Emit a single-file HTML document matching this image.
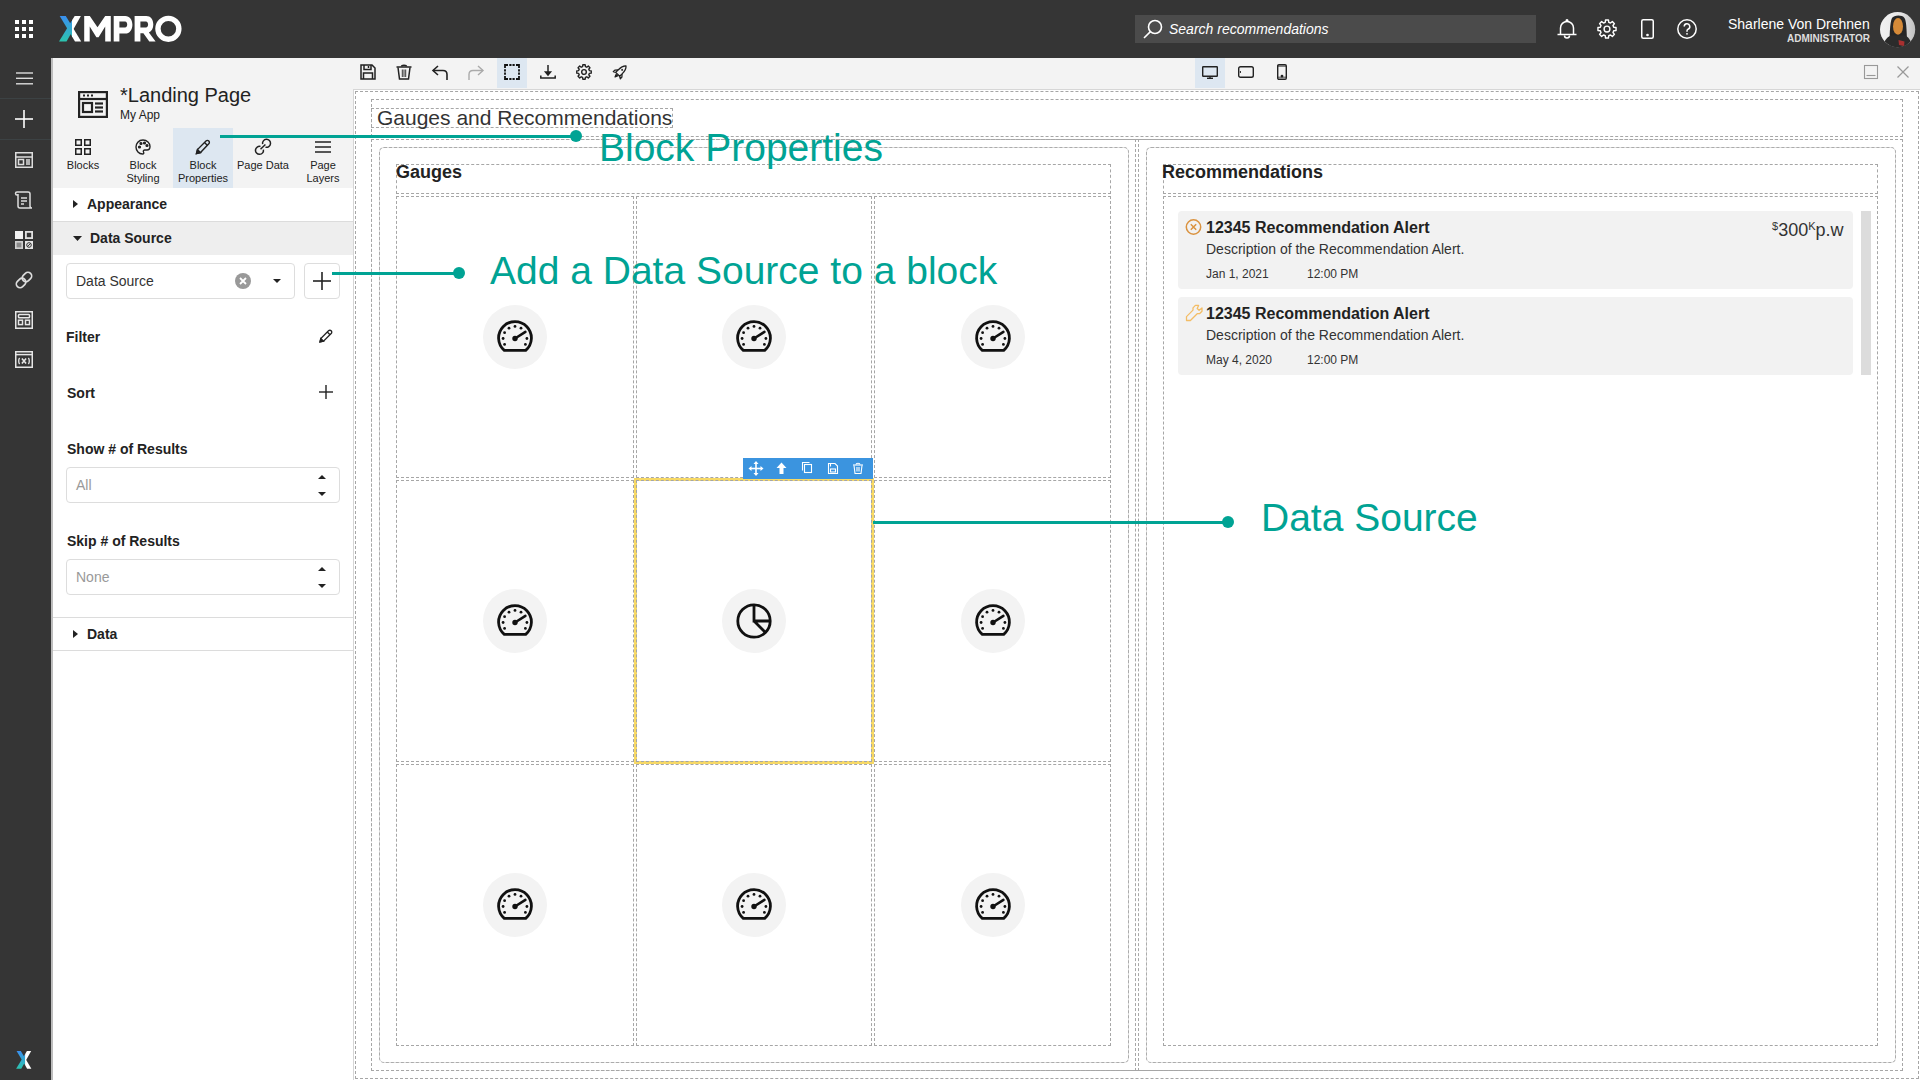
<!DOCTYPE html>
<html><head><meta charset="utf-8">
<style>
*{box-sizing:border-box;margin:0;padding:0}
html,body{width:1920px;height:1080px;overflow:hidden;background:#fff;font-family:"Liberation Sans",sans-serif;color:#222}
.a{position:absolute}
.t{position:absolute;white-space:nowrap;line-height:1}
.dash{position:absolute;border:1px dashed #a6a6a6}
.teal{color:#00a394}
.tl{position:absolute;background:#00a394}
.dot{position:absolute;width:12px;height:12px;border-radius:50%;background:#00a394}
svg{position:absolute;overflow:visible}
.lbl{font-size:14px;font-weight:bold;color:#222}
.tab{position:absolute;top:128px;width:60px;height:60px;text-align:center;font-size:11px;line-height:13px;color:#222}
.tab span{position:absolute;left:0;width:60px;top:31px}
.circ{position:absolute;width:64px;height:64px;border-radius:50%;background:#f3f3f3}
</style></head><body>

<!-- TOP BAR -->
<div class="a" style="left:0;top:0;width:1920px;height:58px;background:#353535"></div>
<!-- apps grid -->
<svg style="left:15px;top:20px" width="18" height="18" viewBox="0 0 18 18" fill="#fff">
<rect x="0" y="0" width="4" height="4"/><rect x="7" y="0" width="4" height="4"/><rect x="14" y="0" width="4" height="4"/>
<rect x="0" y="7" width="4" height="4"/><rect x="7" y="7" width="4" height="4"/><rect x="14" y="7" width="4" height="4"/>
<rect x="0" y="14" width="4" height="4"/><rect x="7" y="14" width="4" height="4"/><rect x="14" y="14" width="4" height="4"/>
</svg>
<!-- XMPRO logo -->
<svg style="left:0;top:0" width="200" height="58" viewBox="0 0 200 58">
<defs><linearGradient id="xg" x1="0" y1="16" x2="0" y2="41.5" gradientUnits="userSpaceOnUse"><stop offset="0" stop-color="#3a8ff0"/><stop offset="1" stop-color="#2cc4ae"/></linearGradient>
<clipPath id="xl"><rect x="0" y="0" width="72" height="58"/></clipPath><clipPath id="xr"><rect x="72" y="0" width="50" height="58"/></clipPath></defs>
<g clip-path="url(#xl)" fill="url(#xg)"><polygon points="59.7,16 65.8,16 81.2,41.4 75,41.4"/><polygon points="74.7,16 80.9,16 66.5,41.4 59,41.4"/></g>
<g clip-path="url(#xr)" fill="#fff"><polygon points="59.7,16 65.8,16 81.2,41.4 75,41.4"/><polygon points="74.7,16 80.9,16 66.5,41.4 59,41.4"/></g>
<path fill="#fff" d="M84.2,41.4 V15.9 H89.8 L97.5,27.3 L105.2,15.9 H110.8 V41.4 H105.2 V26.6 L98.6,37.2 H96.4 L89.7,26.6 V41.4 Z"/>
<path fill="#fff" fill-rule="evenodd" d="M113.7,41.4 V15.9 H125.3 C129.6,15.9 132.4,19.5 132.4,24.7 C132.4,29.9 129.6,33.5 125.3,33.5 H119.4 V41.4 Z M119.4,21.4 H125 C126.6,21.4 127.2,23 127.2,24.5 C127.2,26 126.6,27.6 125,27.6 H119.4 Z"/>
<path fill="#fff" fill-rule="evenodd" d="M134.6,41.4 V15.9 H146.3 C150.5,15.9 153.3,19.3 153.3,24.5 C153.3,28.4 151.6,31.3 148.9,32.5 L155.6,41.4 H149.3 L143.4,33.3 H140.4 V41.4 Z M140.4,21.4 H145.9 C147.4,21.4 148.1,23 148.1,24.5 C148.1,26 147.4,27.6 145.9,27.6 H140.4 Z"/>
<circle cx="168.4" cy="28.8" r="10.45" fill="none" stroke="#fff" stroke-width="5.4"/>
</svg>
<!-- search -->
<div class="a" style="left:1135px;top:15px;width:401px;height:28px;background:#4b4b4b"></div>
<svg style="left:1143px;top:19px" width="20" height="20" viewBox="0 0 20 20" fill="none" stroke="#fff" stroke-width="1.6">
<circle cx="12" cy="8" r="6.5"/><line x1="7.4" y1="12.6" x2="1" y2="19"/>
</svg>
<div class="t" style="left:1169px;top:22px;font-size:14px;font-style:italic;color:#fff">Search recommendations</div>
<!-- bell -->
<svg style="left:1557px;top:19px" width="20" height="20" viewBox="0 0 20 20" fill="none" stroke="#fff" stroke-width="1.5">
<path d="M3.5 15.5 V9 a6.5 6.5 0 0 1 13 0 V15.5"/><line x1="0.5" y1="15.5" x2="19.5" y2="15.5"/><path d="M7.5 16.5 a2.5 2.5 0 0 0 5 0"/><circle cx="10" cy="1.5" r="0.8" fill="#fff"/>
</svg>
<!-- gear -->
<svg style="left:1597px;top:19px" width="20" height="20" viewBox="0 0 24 24" fill="none" stroke="#fff" stroke-width="1.7" stroke-linejoin="round">
<path d="M9.87 3.98 L10.25 1.14 L13.75 1.14 L14.13 3.98 L16.16 4.82 L18.44 3.08 L20.92 5.56 L19.18 7.84 L20.02 9.87 L22.86 10.25 L22.86 13.75 L20.02 14.13 L19.18 16.16 L20.92 18.44 L18.44 20.92 L16.16 19.18 L14.13 20.02 L13.75 22.86 L10.25 22.86 L9.87 20.02 L7.84 19.18 L5.56 20.92 L3.08 18.44 L4.82 16.16 L3.98 14.13 L1.14 13.75 L1.14 10.25 L3.98 9.87 L4.82 7.84 L3.08 5.56 L5.56 3.08 L7.84 4.82 Z"/><circle cx="12" cy="12" r="3.5"/>
</svg>
<!-- phone -->
<svg style="left:1641px;top:19px" width="13" height="20" viewBox="0 0 13 20" fill="none" stroke="#fff" stroke-width="1.5">
<rect x="0.75" y="0.75" width="11.5" height="18.5" rx="1.5"/><circle cx="6.5" cy="16" r="0.6" fill="#fff"/>
</svg>
<!-- help -->
<svg style="left:1677px;top:19px" width="20" height="20" viewBox="0 0 20 20" fill="none" stroke="#fff" stroke-width="1.5">
<circle cx="10" cy="10" r="9.2"/><path d="M7.2 7.6 a2.8 2.8 0 1 1 3.8 2.6 c-0.8 0.4 -1 0.9 -1 1.8 v0.8"/><circle cx="10" cy="14.8" r="0.9" fill="#fff" stroke="none"/>
</svg>
<div class="t" style="left:1728px;top:17px;font-size:14px;color:#fff">Sharlene Von Drehnen</div>
<div class="t" style="left:1787px;top:34px;font-size:10px;font-weight:bold;color:#ddd">ADMINISTRATOR</div>
<!-- avatar -->
<svg style="left:1880px;top:12px" width="36" height="36" viewBox="0 0 36 36">
<defs><clipPath id="av"><circle cx="17.6" cy="17.6" r="17.6"/></clipPath>
<linearGradient id="avbg" x1="0" y1="0" x2="1" y2="0"><stop offset="0" stop-color="#f2f2f2"/><stop offset="0.55" stop-color="#e8e8e8"/><stop offset="1" stop-color="#bdbdbd"/></linearGradient></defs>
<g clip-path="url(#av)">
<rect width="36" height="36" fill="url(#avbg)"/>
<path d="M9.5 36 C9.5 26 9.8 10 12 6 C14 3 22 2.5 24.5 6 C27 10 26.5 22 27.5 36 Z" fill="#262626"/>
<path d="M2 36 C4 28 8 24 12 23.5 L24 23.5 C28 24 31 28 33 36 Z" fill="#2b2b2b"/>
<ellipse cx="18" cy="14.4" rx="5" ry="8.3" fill="#d58a38"/>
<path d="M18.5 28 L24.5 29.5 L24 34 L19 33 Z" fill="#a83030"/>
</g>
</svg>

<!-- LEFT NAV -->
<div class="a" style="left:0;top:58px;width:51px;height:1022px;background:#353535"></div>
<div class="a" style="left:0;top:98px;width:51px;height:1px;background:#3c4244"></div>
<div class="a" style="left:0;top:139px;width:51px;height:1px;background:#3c4244"></div>
<div class="a" style="left:51px;top:58px;width:2px;height:1022px;background:#bdbdbd"></div>
<!-- hamburger -->
<svg style="left:16px;top:72px" width="17" height="13" viewBox="0 0 17 13" stroke="#ddd" stroke-width="1.4">
<line x1="0" y1="1" x2="17" y2="1"/><line x1="0" y1="6.3" x2="17" y2="6.3"/><line x1="0" y1="11.8" x2="17" y2="11.8"/>
</svg>
<!-- plus -->
<svg style="left:15px;top:110px" width="18" height="18" viewBox="0 0 18 18" stroke="#fff" stroke-width="1.6">
<line x1="9" y1="0" x2="9" y2="18"/><line x1="0" y1="9" x2="18" y2="9"/>
</svg>
<!-- page icon -->
<svg style="left:15px;top:152px" width="18" height="16" viewBox="0 0 18 16" fill="none" stroke="#ddd" stroke-width="1.5">
<rect x="0.75" y="0.75" width="16.5" height="14.5"/><line x1="0.75" y1="5" x2="17.25" y2="5"/><rect x="3.5" y="7.5" width="5" height="5"/><line x1="11" y1="8" x2="15" y2="8"/><line x1="11" y1="10" x2="15" y2="10"/><line x1="11" y1="12" x2="15" y2="12"/>
</svg>
<!-- scroll icon -->
<svg style="left:15px;top:191px" width="19" height="19" viewBox="0 0 19 19" fill="none" stroke="#ddd" stroke-width="1.5">
<path d="M2 1h11a2 2 0 0 1 2 2v12a2 2 0 0 0 2 2H5a2 2 0 0 1-2-2V3"/><path d="M2 1a1.5 1.5 0 0 0 0 3h1"/><line x1="6" y1="7" x2="12" y2="7"/><line x1="6" y1="10" x2="12" y2="10"/><line x1="6" y1="13" x2="9" y2="13"/>
</svg>
<!-- dashboard icon -->
<svg style="left:15px;top:231px" width="18" height="18" viewBox="0 0 18 18">
<rect x="0" y="0" width="8" height="8" fill="#f2f2f2"/>
<rect x="10" y="0" width="8" height="8" fill="#e0e0e0"/><rect x="11.8" y="1.8" width="4.4" height="4.4" fill="#353535"/>
<rect x="0" y="10" width="8" height="8" fill="#cfcfcf"/><rect x="1.6" y="11.6" width="4.8" height="4.8" fill="#8a8a8a"/>
<rect x="10" y="10" width="8" height="8" fill="#e6e6e6"/><circle cx="14" cy="14" r="2.3" fill="none" stroke="#353535" stroke-width="1"/><line x1="12.2" y1="15.8" x2="15.8" y2="12.2" stroke="#353535" stroke-width="1"/>
</svg>
<!-- link icon -->
<svg style="left:15px;top:271px" width="18" height="18" viewBox="0 0 18 18" fill="none" stroke="#ddd" stroke-width="1.7">
<g transform="rotate(-45 9 9)"><rect x="-0.3" y="5.3" width="10.3" height="7.4" rx="3.7"/><rect x="8" y="5.3" width="10.3" height="7.4" rx="3.7"/></g>
</svg>
<!-- form icon -->
<svg style="left:15px;top:311px" width="18" height="18" viewBox="0 0 18 18" fill="none" stroke="#e6e6e6" stroke-width="1.5">
<rect x="0.75" y="0.75" width="16.5" height="16.5"/><rect x="3.5" y="3.5" width="11" height="3.2" rx="0.8"/><rect x="3.5" y="9.2" width="4" height="4.4"/><rect x="10.5" y="9.2" width="4" height="4.4"/>
</svg>
<!-- variable icon -->
<svg style="left:15px;top:351px" width="18" height="17" viewBox="0 0 18 17" fill="none" stroke="#e6e6e6" stroke-width="1.5">
<rect x="0.75" y="0.75" width="16.5" height="15.5"/><line x1="0.75" y1="3.6" x2="17.25" y2="3.6"/>
<path d="M4.6 7 C3.4 8.5 3.4 11.5 4.6 13" stroke-width="1.3"/><path d="M13.4 7 C14.6 8.5 14.6 11.5 13.4 13" stroke-width="1.3"/>
<path d="M6.9 7.6 L11.1 12.6 M11.1 7.6 L6.9 12.6" stroke-width="1.6"/>
</svg>
<!-- bottom X -->
<svg style="left:10px;top:1045px" width="30" height="30" viewBox="10 1045 30 30">
<defs><linearGradient id="xg2" x1="0" y1="16" x2="0" y2="41.5" gradientUnits="userSpaceOnUse"><stop offset="0" stop-color="#3a8ff0"/><stop offset="1" stop-color="#2cc4ae"/></linearGradient>
<clipPath id="xl2"><rect x="0" y="0" width="72" height="58"/></clipPath><clipPath id="xr2"><rect x="72" y="0" width="50" height="58"/></clipPath></defs>
<g transform="translate(16.1 1051.1) scale(0.69) translate(-59 -16)">
<g clip-path="url(#xl2)" fill="url(#xg2)"><polygon points="59.7,16 65.8,16 81.2,41.4 75,41.4"/><polygon points="74.7,16 80.9,16 66.5,41.4 59,41.4"/></g>
<g clip-path="url(#xr2)" fill="#fff"><polygon points="59.7,16 65.8,16 81.2,41.4 75,41.4"/><polygon points="74.7,16 80.9,16 66.5,41.4 59,41.4"/></g>
</g>
</svg>

<!-- LEFT PANEL -->
<div class="a" style="left:53px;top:58px;width:300px;height:130px;background:#f3f3f3"></div>
<!-- page icon big -->
<svg style="left:78px;top:91px" width="30" height="27" viewBox="0 0 30 27" fill="none" stroke="#222" stroke-width="2.2">
<rect x="1.1" y="1.1" width="27.8" height="24.8"/><line x1="1.1" y1="8" x2="28.9" y2="8"/>
<rect x="5" y="12" width="9" height="9"/><line x1="17" y1="12.5" x2="25" y2="12.5"/><line x1="17" y1="16.5" x2="25" y2="16.5"/><line x1="17" y1="20.5" x2="25" y2="20.5"/>
<line x1="5" y1="4.5" x2="7" y2="4.5"/><line x1="9" y1="4.5" x2="11" y2="4.5"/><line x1="13" y1="4.5" x2="15" y2="4.5"/>
</svg>
<div class="t" style="left:120px;top:85px;font-size:20px;color:#222">*Landing Page</div>
<div class="t" style="left:120px;top:109px;font-size:12px;color:#222">My App</div>
<!-- tabs -->
<div class="a" style="left:173px;top:128px;width:60px;height:60px;background:#dde7f1"></div>
<div class="tab" style="left:53px"><span>Blocks</span></div>
<div class="tab" style="left:113px"><span>Block<br>Styling</span></div>
<div class="tab" style="left:173px"><span>Block<br>Properties</span></div>
<div class="tab" style="left:233px"><span>Page Data</span></div>
<div class="tab" style="left:293px"><span>Page<br>Layers</span></div>
<!-- tab icons -->
<svg style="left:75px;top:139px" width="16" height="16" viewBox="0 0 16 16" fill="none" stroke="#222" stroke-width="1.5">
<rect x="0.75" y="0.75" width="5.5" height="5.5"/><rect x="9.75" y="0.75" width="5.5" height="5.5"/><rect x="0.75" y="9.75" width="5.5" height="5.5"/><rect x="9.75" y="9.75" width="5.5" height="5.5"/>
</svg>
<svg style="left:135px;top:139px" width="16" height="16" viewBox="0 0 16 16" fill="none" stroke="#222" stroke-width="1.4">
<path d="M8 1 C3.5 1 1 4.5 1 8 c0 4 3 7 6.5 7 c1.5 0 1.5-1.2 1-2 c-.6-1 .2-2 1.3-2 H12 c2 0 3-1.5 3-3.5 C15 4 12 1 8 1z"/>
<circle cx="4.5" cy="8" r="0.9" fill="#222"/><circle cx="6" cy="4.5" r="0.9" fill="#222"/><circle cx="9.5" cy="4" r="0.9" fill="#222"/><circle cx="12" cy="6.5" r="0.9" fill="#222"/>
</svg>
<svg style="left:195px;top:139px" width="16" height="16" viewBox="0 0 16 16" fill="none" stroke="#222" stroke-width="1.4">
<path d="M1.5 14.5 l1-4 L11 2 a1.8 1.8 0 0 1 2.8 2.8 L5.5 13.5z"/><line x1="9.5" y1="3.5" x2="12.5" y2="6.5"/><path d="M1.5 14.5 l1-4 3 3z" fill="#222"/>
</svg>
<svg style="left:254px;top:138px" width="18" height="18" viewBox="0 0 18 18" fill="none" stroke="#222" stroke-width="1.5">
<path d="M8.6 6.1 A4 4 0 1 1 11.5 9.2"/><path d="M9.4 11.6 A4 4 0 1 1 6.5 8.5"/><line x1="6.5" y1="11.2" x2="11.4" y2="6.5"/>
</svg>
<svg style="left:315px;top:141px" width="16" height="12" viewBox="0 0 16 12" stroke="#222" stroke-width="1.5">
<line x1="0" y1="1" x2="16" y2="1"/><line x1="0" y1="6" x2="16" y2="6"/><line x1="0" y1="11" x2="16" y2="11"/>
</svg>

<!-- accordion -->
<div class="a" style="left:53px;top:221px;width:300px;height:1px;background:#dcdcdc"></div>
<div class="a" style="left:53px;top:222px;width:300px;height:33px;background:#eeeeee"></div>
<svg style="left:73px;top:200px" width="5" height="8" viewBox="0 0 5 8" fill="#222"><polygon points="0,0 5,4 0,8"/></svg>
<div class="t lbl" style="left:87px;top:197px">Appearance</div>
<svg style="left:73px;top:236px" width="9" height="5" viewBox="0 0 9 5" fill="#222"><polygon points="0,0 9,0 4.5,5"/></svg>
<div class="t lbl" style="left:90px;top:231px">Data Source</div>

<!-- data source select -->
<div class="a" style="left:66px;top:263px;width:229px;height:36px;border:1px solid #ddd;border-radius:4px;background:#fff"></div>
<div class="t" style="left:76px;top:274px;font-size:14px;color:#333">Data Source</div>
<svg style="left:235px;top:273px" width="16" height="16" viewBox="0 0 16 16">
<circle cx="8" cy="8" r="8" fill="#999"/><path d="M5 5 L11 11 M11 5 L5 11" stroke="#fff" stroke-width="1.8"/>
</svg>
<svg style="left:273px;top:279px" width="8" height="4" viewBox="0 0 8 4" fill="#222"><polygon points="0,0 8,0 4,4"/></svg>
<div class="a" style="left:304px;top:263px;width:36px;height:36px;border:1px solid #ddd;border-radius:4px;background:#fff"></div>
<svg style="left:313px;top:272px" width="18" height="18" viewBox="0 0 18 18" stroke="#222" stroke-width="1.6">
<line x1="9" y1="0" x2="9" y2="18"/><line x1="0" y1="9" x2="18" y2="9"/>
</svg>

<div class="t lbl" style="left:66px;top:330px">Filter</div>
<svg style="left:319px;top:329px" width="14" height="14" viewBox="0 0 14 14" fill="none" stroke="#222" stroke-width="1.3">
<path d="M1 13 l.8-3.5 L9.5 1.8 a1.6 1.6 0 0 1 2.7 2.7 L4.5 12.2z"/><line x1="8.3" y1="3" x2="11" y2="5.7"/><path d="M1 13 l.8-3.5 2.7 2.7z" fill="#222"/>
</svg>
<div class="t lbl" style="left:67px;top:386px">Sort</div>
<svg style="left:319px;top:385px" width="14" height="14" viewBox="0 0 14 14" stroke="#222" stroke-width="1.4">
<line x1="7" y1="0" x2="7" y2="14"/><line x1="0" y1="7" x2="14" y2="7"/>
</svg>

<div class="t lbl" style="left:67px;top:442px">Show # of Results</div>
<div class="a" style="left:66px;top:467px;width:274px;height:36px;border:1px solid #ddd;border-radius:4px;background:#fff"></div>
<div class="t" style="left:76px;top:478px;font-size:14px;color:#999">All</div>
<svg style="left:318px;top:475px" width="8" height="21" viewBox="0 0 8 21" fill="#222"><polygon points="0,4 8,4 4,0"/><polygon points="0,17 8,17 4,21"/></svg>

<div class="t lbl" style="left:67px;top:534px">Skip # of Results</div>
<div class="a" style="left:66px;top:559px;width:274px;height:36px;border:1px solid #ddd;border-radius:4px;background:#fff"></div>
<div class="t" style="left:76px;top:570px;font-size:14px;color:#999">None</div>
<svg style="left:318px;top:567px" width="8" height="21" viewBox="0 0 8 21" fill="#222"><polygon points="0,4 8,4 4,0"/><polygon points="0,17 8,17 4,21"/></svg>

<div class="a" style="left:53px;top:617px;width:300px;height:1px;background:#dcdcdc"></div>
<svg style="left:73px;top:630px" width="5" height="8" viewBox="0 0 5 8" fill="#222"><polygon points="0,0 5,4 0,8"/></svg>
<div class="t lbl" style="left:87px;top:627px">Data</div>
<div class="a" style="left:53px;top:650px;width:300px;height:1px;background:#dcdcdc"></div>

<!-- TOOLBAR -->
<div class="a" style="left:353px;top:58px;width:1567px;height:31px;background:#f3f3f3"></div>
<div class="a" style="left:497px;top:58px;width:30px;height:30px;background:#dde7f1"></div>
<div class="a" style="left:1195px;top:58px;width:30px;height:30px;background:#dde7f1"></div>

<!-- toolbar icons -->
<svg style="left:360px;top:64px" width="16" height="16" viewBox="0 0 16 16" fill="none" stroke="#222" stroke-width="1.5">
<path d="M1 1 H12 L15 4 V15 H1 Z"/><path d="M4 1 V5.5 H11 V1"/><line x1="8.5" y1="2" x2="8.5" y2="4"/><path d="M3.5 15 V9 H12.5 V15"/>
</svg>
<svg style="left:396px;top:64px" width="16" height="16" viewBox="0 0 16 16" fill="none" stroke="#222" stroke-width="1.5">
<line x1="0.5" y1="3" x2="15.5" y2="3"/><path d="M5.5 2.5 C5.5 0.8 10.5 0.8 10.5 2.5"/><path d="M2 3.5 L3.5 15 H12.5 L14 3.5"/><g stroke-width="0.9"><line x1="6.3" y1="5.5" x2="6.3" y2="13"/><line x1="8" y1="5.5" x2="8" y2="13"/><line x1="9.7" y1="5.5" x2="9.7" y2="13"/></g>
</svg>
<svg style="left:432px;top:65px" width="16" height="15" viewBox="0 0 16 15" fill="none" stroke="#222" stroke-width="1.6">
<path d="M6 1 L1 5.5 L6 10"/><path d="M1 5.5 H11 C13.5 5.5 15 7 15 9.5 V15"/>
</svg>
<svg style="left:468px;top:65px" width="16" height="15" viewBox="0 0 16 15" fill="none" stroke="#aaa" stroke-width="1.4">
<path d="M10 1 L15 5.5 L10 10"/><path d="M15 5.5 H5 C2.5 5.5 1 7 1 9.5 V15"/>
</svg>
<svg style="left:504px;top:64px" width="16" height="16" viewBox="0 0 16 16" fill="none" stroke="#111" stroke-width="1.8" stroke-linecap="butt">
<path d="M1 4 V1 H4 M12 1 H15 V4 M15 12 V15 H12 M4 15 H1 V12"/><path d="M5.3 1 H7.5 M8.5 1 H10.7 M5.3 15 H7.5 M8.5 15 H10.7 M1 5.3 V7.5 M1 8.5 V10.7 M15 5.3 V7.5 M15 8.5 V10.7"/>
</svg>
<svg style="left:540px;top:65px" width="16" height="14" viewBox="0 0 16 14" fill="none" stroke="#222" stroke-width="1.5">
<line x1="8" y1="0" x2="8" y2="9"/><polygon points="5.5,7 10.5,7 8,10" fill="#222"/><path d="M0.8 10.5 V13 H15.2 V10.5"/>
</svg>
<svg style="left:576px;top:64px" width="16" height="16" viewBox="0 0 24 24" fill="none" stroke="#222" stroke-width="2.1" stroke-linejoin="round">
<path d="M9.87 3.98 L10.25 1.14 L13.75 1.14 L14.13 3.98 L16.16 4.82 L18.44 3.08 L20.92 5.56 L19.18 7.84 L20.02 9.87 L22.86 10.25 L22.86 13.75 L20.02 14.13 L19.18 16.16 L20.92 18.44 L18.44 20.92 L16.16 19.18 L14.13 20.02 L13.75 22.86 L10.25 22.86 L9.87 20.02 L7.84 19.18 L5.56 20.92 L3.08 18.44 L4.82 16.16 L3.98 14.13 L1.14 13.75 L1.14 10.25 L3.98 9.87 L4.82 7.84 L3.08 5.56 L5.56 3.08 L7.84 4.82 Z"/><circle cx="12" cy="12" r="3.5"/>
</svg>
<svg style="left:612px;top:64px" width="16" height="16" viewBox="0 0 16 16" fill="none" stroke="#222" stroke-width="1.3" stroke-linejoin="round">
<g transform="rotate(45 8 8) translate(0 -0.5)">
<path d="M8 0 C10.3 2 10.8 5 10.8 8 V11.8 H5.2 V8 C5.2 5 5.7 2 8 0 Z"/>
<path d="M5.2 8.5 L3 10.8 V13 L5.2 11.8"/><path d="M10.8 8.5 L13 10.8 V13 L10.8 11.8"/>
<path d="M6.8 12.5 L8 15.5 L9.2 12.5" fill="#222"/>
<circle cx="8" cy="5.5" r="1" fill="#222" stroke="none"/>
</g>
</svg>
<!-- device icons -->
<svg style="left:1202px;top:66px" width="16" height="13" viewBox="0 0 16 13" fill="none" stroke="#222" stroke-width="1.4">
<rect x="0.7" y="0.7" width="14.6" height="9.6" rx="0.5"/><line x1="8" y1="10.5" x2="8" y2="12"/><line x1="5" y1="12.3" x2="11" y2="12.3"/>
</svg>
<svg style="left:1238px;top:66px" width="16" height="12" viewBox="0 0 16 12" fill="none" stroke="#222" stroke-width="1.4">
<rect x="0.7" y="0.7" width="14.6" height="10.6" rx="1.8"/><line x1="2.4" y1="5" x2="2.4" y2="7" stroke-width="1"/>
</svg>
<svg style="left:1277px;top:64px" width="10" height="16" viewBox="0 0 10 16" fill="none" stroke="#222" stroke-width="1.4">
<rect x="0.7" y="0.7" width="8.6" height="14.6" rx="1.2"/><line x1="1" y1="2.2" x2="9" y2="2.2" stroke-width="0.8"/><line x1="1" y1="13.2" x2="9" y2="13.2" stroke-width="0.8"/><circle cx="5" cy="12.2" r="0.7" fill="#222"/>
</svg>
<!-- window controls -->
<svg style="left:1864px;top:65px" width="14" height="14" viewBox="0 0 14 14" fill="none" stroke="#999" stroke-width="1.1">
<rect x="0.5" y="0.5" width="13" height="13"/><line x1="2.5" y1="10.5" x2="11.5" y2="10.5"/>
</svg>
<svg style="left:1897px;top:66px" width="12" height="12" viewBox="0 0 12 12" stroke="#999" stroke-width="1.3">
<line x1="0.5" y1="0.5" x2="11.5" y2="11.5"/><line x1="11.5" y1="0.5" x2="0.5" y2="11.5"/>
</svg>

<!-- CANVAS -->
<div class="a" style="left:353px;top:89px;width:1567px;height:991px;border-left:1px solid #d6d6d6;border-top:1px solid #d6d6d6;background:#fff"></div>
<div class="dash" style="left:355px;top:91px;width:1564px;height:988px"></div>
<div class="dash" style="left:371px;top:99px;width:1532px;height:38px"></div>
<div class="dash" style="left:371px;top:108px;width:302px;height:20px"></div>
<div class="t" style="left:377px;top:107px;font-size:21px;color:#333">Gauges and Recommendations</div>
<div class="dash" style="left:371px;top:139px;width:1532px;height:932px"></div>
<div class="dash" style="left:371px;top:139px;width:765px;height:932px"></div>
<div class="dash" style="left:1138px;top:139px;width:765px;height:932px"></div>
<div class="a" style="left:379px;top:147px;width:750px;height:916px;border-radius:5px;border:1px solid #e0e0e0"></div><div class="dash" style="left:379px;top:147px;width:750px;height:916px;border-radius:5px;border-color:#acacac"></div>
<div class="a" style="left:1146px;top:147px;width:750px;height:916px;border-radius:5px;border:1px solid #e0e0e0"></div><div class="dash" style="left:1146px;top:147px;width:750px;height:916px;border-radius:5px;border-color:#acacac"></div>

<div class="dash" style="left:396px;top:164px;width:715px;height:30px"></div>
<div class="t" style="left:396px;top:163px;font-size:18px;font-weight:bold;color:#222">Gauges</div>

<!-- gauge grid -->
<div class="dash" style="left:396px;top:196px;width:238px;height:282px"></div>
<div class="dash" style="left:636px;top:196px;width:236px;height:282px"></div>
<div class="dash" style="left:874px;top:196px;width:237px;height:282px"></div>
<div class="dash" style="left:396px;top:480px;width:238px;height:282px"></div>
<div class="dash" style="left:636px;top:480px;width:236px;height:282px"></div>
<div class="dash" style="left:874px;top:480px;width:237px;height:282px"></div>
<div class="dash" style="left:396px;top:764px;width:238px;height:282px"></div>
<div class="dash" style="left:636px;top:764px;width:236px;height:282px"></div>
<div class="dash" style="left:874px;top:764px;width:237px;height:282px"></div>

<div class="circ" style="left:483px;top:305px"></div>
<svg style="left:497px;top:321px" width="36" height="32" viewBox="0 0 36 32" fill="none" stroke="#111" stroke-width="2.8">
<path d="M7.3 29.4 A16.4 16.4 0 1 1 28.7 29.4 Z"/>
<g fill="#111" stroke="none"><circle cx="18" cy="5.4" r="1.4"/><circle cx="12" cy="7.2" r="1.4"/><circle cx="24" cy="7.2" r="1.4"/><circle cx="7.6" cy="11.7" r="1.4"/><circle cx="6.1" cy="17.5" r="1.4"/><circle cx="29.9" cy="17.5" r="1.4"/><circle cx="7.6" cy="23.4" r="1.4"/><circle cx="28.4" cy="23.4" r="1.4"/><circle cx="18" cy="17.5" r="2.7"/></g>
<line x1="18" y1="17.5" x2="28.4" y2="10.9" stroke-width="2.6" stroke-linecap="round"/>
</svg>
<div class="circ" style="left:722px;top:305px"></div>
<svg style="left:736px;top:321px" width="36" height="32" viewBox="0 0 36 32" fill="none" stroke="#111" stroke-width="2.8">
<path d="M7.3 29.4 A16.4 16.4 0 1 1 28.7 29.4 Z"/>
<g fill="#111" stroke="none"><circle cx="18" cy="5.4" r="1.4"/><circle cx="12" cy="7.2" r="1.4"/><circle cx="24" cy="7.2" r="1.4"/><circle cx="7.6" cy="11.7" r="1.4"/><circle cx="6.1" cy="17.5" r="1.4"/><circle cx="29.9" cy="17.5" r="1.4"/><circle cx="7.6" cy="23.4" r="1.4"/><circle cx="28.4" cy="23.4" r="1.4"/><circle cx="18" cy="17.5" r="2.7"/></g>
<line x1="18" y1="17.5" x2="28.4" y2="10.9" stroke-width="2.6" stroke-linecap="round"/>
</svg>
<div class="circ" style="left:961px;top:305px"></div>
<svg style="left:975px;top:321px" width="36" height="32" viewBox="0 0 36 32" fill="none" stroke="#111" stroke-width="2.8">
<path d="M7.3 29.4 A16.4 16.4 0 1 1 28.7 29.4 Z"/>
<g fill="#111" stroke="none"><circle cx="18" cy="5.4" r="1.4"/><circle cx="12" cy="7.2" r="1.4"/><circle cx="24" cy="7.2" r="1.4"/><circle cx="7.6" cy="11.7" r="1.4"/><circle cx="6.1" cy="17.5" r="1.4"/><circle cx="29.9" cy="17.5" r="1.4"/><circle cx="7.6" cy="23.4" r="1.4"/><circle cx="28.4" cy="23.4" r="1.4"/><circle cx="18" cy="17.5" r="2.7"/></g>
<line x1="18" y1="17.5" x2="28.4" y2="10.9" stroke-width="2.6" stroke-linecap="round"/>
</svg>
<div class="circ" style="left:483px;top:589px"></div>
<svg style="left:497px;top:605px" width="36" height="32" viewBox="0 0 36 32" fill="none" stroke="#111" stroke-width="2.8">
<path d="M7.3 29.4 A16.4 16.4 0 1 1 28.7 29.4 Z"/>
<g fill="#111" stroke="none"><circle cx="18" cy="5.4" r="1.4"/><circle cx="12" cy="7.2" r="1.4"/><circle cx="24" cy="7.2" r="1.4"/><circle cx="7.6" cy="11.7" r="1.4"/><circle cx="6.1" cy="17.5" r="1.4"/><circle cx="29.9" cy="17.5" r="1.4"/><circle cx="7.6" cy="23.4" r="1.4"/><circle cx="28.4" cy="23.4" r="1.4"/><circle cx="18" cy="17.5" r="2.7"/></g>
<line x1="18" y1="17.5" x2="28.4" y2="10.9" stroke-width="2.6" stroke-linecap="round"/>
</svg>
<div class="circ" style="left:722px;top:589px"></div>
<svg style="left:736px;top:603px" width="36" height="36" viewBox="0 0 36 36" fill="none" stroke="#111" stroke-width="2.8">
<circle cx="18" cy="18" r="16.2"/><path d="M18 1.8 V18 H34.2 M18 18 L29.5 29.5"/>
</svg>
<div class="circ" style="left:961px;top:589px"></div>
<svg style="left:975px;top:605px" width="36" height="32" viewBox="0 0 36 32" fill="none" stroke="#111" stroke-width="2.8">
<path d="M7.3 29.4 A16.4 16.4 0 1 1 28.7 29.4 Z"/>
<g fill="#111" stroke="none"><circle cx="18" cy="5.4" r="1.4"/><circle cx="12" cy="7.2" r="1.4"/><circle cx="24" cy="7.2" r="1.4"/><circle cx="7.6" cy="11.7" r="1.4"/><circle cx="6.1" cy="17.5" r="1.4"/><circle cx="29.9" cy="17.5" r="1.4"/><circle cx="7.6" cy="23.4" r="1.4"/><circle cx="28.4" cy="23.4" r="1.4"/><circle cx="18" cy="17.5" r="2.7"/></g>
<line x1="18" y1="17.5" x2="28.4" y2="10.9" stroke-width="2.6" stroke-linecap="round"/>
</svg>
<div class="circ" style="left:483px;top:873px"></div>
<svg style="left:497px;top:889px" width="36" height="32" viewBox="0 0 36 32" fill="none" stroke="#111" stroke-width="2.8">
<path d="M7.3 29.4 A16.4 16.4 0 1 1 28.7 29.4 Z"/>
<g fill="#111" stroke="none"><circle cx="18" cy="5.4" r="1.4"/><circle cx="12" cy="7.2" r="1.4"/><circle cx="24" cy="7.2" r="1.4"/><circle cx="7.6" cy="11.7" r="1.4"/><circle cx="6.1" cy="17.5" r="1.4"/><circle cx="29.9" cy="17.5" r="1.4"/><circle cx="7.6" cy="23.4" r="1.4"/><circle cx="28.4" cy="23.4" r="1.4"/><circle cx="18" cy="17.5" r="2.7"/></g>
<line x1="18" y1="17.5" x2="28.4" y2="10.9" stroke-width="2.6" stroke-linecap="round"/>
</svg>
<div class="circ" style="left:722px;top:873px"></div>
<svg style="left:736px;top:889px" width="36" height="32" viewBox="0 0 36 32" fill="none" stroke="#111" stroke-width="2.8">
<path d="M7.3 29.4 A16.4 16.4 0 1 1 28.7 29.4 Z"/>
<g fill="#111" stroke="none"><circle cx="18" cy="5.4" r="1.4"/><circle cx="12" cy="7.2" r="1.4"/><circle cx="24" cy="7.2" r="1.4"/><circle cx="7.6" cy="11.7" r="1.4"/><circle cx="6.1" cy="17.5" r="1.4"/><circle cx="29.9" cy="17.5" r="1.4"/><circle cx="7.6" cy="23.4" r="1.4"/><circle cx="28.4" cy="23.4" r="1.4"/><circle cx="18" cy="17.5" r="2.7"/></g>
<line x1="18" y1="17.5" x2="28.4" y2="10.9" stroke-width="2.6" stroke-linecap="round"/>
</svg>
<div class="circ" style="left:961px;top:873px"></div>
<svg style="left:975px;top:889px" width="36" height="32" viewBox="0 0 36 32" fill="none" stroke="#111" stroke-width="2.8">
<path d="M7.3 29.4 A16.4 16.4 0 1 1 28.7 29.4 Z"/>
<g fill="#111" stroke="none"><circle cx="18" cy="5.4" r="1.4"/><circle cx="12" cy="7.2" r="1.4"/><circle cx="24" cy="7.2" r="1.4"/><circle cx="7.6" cy="11.7" r="1.4"/><circle cx="6.1" cy="17.5" r="1.4"/><circle cx="29.9" cy="17.5" r="1.4"/><circle cx="7.6" cy="23.4" r="1.4"/><circle cx="28.4" cy="23.4" r="1.4"/><circle cx="18" cy="17.5" r="2.7"/></g>
<line x1="18" y1="17.5" x2="28.4" y2="10.9" stroke-width="2.6" stroke-linecap="round"/>
</svg>


<!-- selection -->
<div class="a" style="left:634px;top:478px;width:240px;height:286px;border:3px solid #f7d966"></div>
<div class="dash" style="left:636px;top:480px;width:236px;height:282px"></div>
<div class="a" style="left:743px;top:458px;width:130px;height:21px;background:#3b94df"></div>
<svg style="left:743px;top:458px" width="130" height="21" viewBox="0 0 130 21" fill="#fff" stroke="#fff">
<g stroke-width="1.6"><line x1="7" y1="10.5" x2="19" y2="10.5"/><line x1="13" y1="4.5" x2="13" y2="16.5"/></g>
<g stroke="none"><polygon points="13,3 10.5,6 15.5,6"/><polygon points="13,18 10.5,15 15.5,15"/><polygon points="5.5,10.5 8.5,8 8.5,13"/><polygon points="20.5,10.5 17.5,8 17.5,13"/></g>
<g stroke="none"><polygon points="38.5,4.5 33.5,10 36.5,10 36.5,16 40.5,16 40.5,10 43.5,10"/></g>
<g fill="none" stroke-width="1.1"><rect x="61.5" y="6.5" width="7" height="8"/><path d="M59.5 12.5 V4.5 H66.5"/></g>
<g fill="none" stroke-width="1.1"><path d="M85.5 5.5 H92 L94.5 8 V15.5 H85.5 Z"/><rect x="87.5" y="11" width="5" height="3"/><line x1="87.5" y1="5.5" x2="87.5" y2="8.5"/></g>
<g fill="none" stroke-width="1.1"><line x1="110" y1="7" x2="120" y2="7"/><path d="M113 6.5 C113 4.8 117 4.8 117 6.5"/><path d="M111 7.5 L112 15.5 H118 L119 7.5"/><line x1="114" y1="9" x2="114" y2="13.5"/><line x1="116" y1="9" x2="116" y2="13.5"/></g>
</svg>

<!-- recommendations -->
<div class="dash" style="left:1163px;top:164px;width:715px;height:30px"></div>
<div class="t" style="left:1162px;top:163px;font-size:18px;font-weight:bold;color:#222">Recommendations</div>
<div class="dash" style="left:1163px;top:196px;width:715px;height:850px"></div>
<div class="a" style="left:1178px;top:211px;width:675px;height:78px;background:#f2f2f2;border-radius:4px"></div>
<div class="a" style="left:1178px;top:297px;width:675px;height:78px;background:#f2f2f2;border-radius:4px"></div>
<div class="a" style="left:1861px;top:211px;width:10px;height:164px;background:#dcdcdc"></div>
<svg style="left:1185px;top:219px" width="17" height="17" viewBox="0 0 17 17" fill="none" stroke="#da9340" stroke-width="1.5">
<circle cx="8.5" cy="8" r="7.2"/><path d="M5.8 5.3 L11.2 10.7 M11.2 5.3 L5.8 10.7"/>
</svg>
<svg style="left:1185px;top:304px" width="18" height="18" viewBox="0 0 18 18" fill="none" stroke="#f3bd66" stroke-width="1.3" stroke-linejoin="round">
<path d="M1.5 12.6 L8 6.1 L8 3.9 L10.4 1.4 L13.6 1.4 L12.2 4.5 L14.1 6.3 L17 3.9 L17 7.2 L14.5 9.7 L12.2 9.7 L5.4 16.5 L1.5 16.5 Z"/>
</svg>
<div class="t" style="left:1206px;top:220px;font-size:16px;font-weight:bold;color:#222">12345 Recommendation Alert</div>
<div class="t" style="left:1206px;top:242px;font-size:14px;color:#333">Description of the Recommendation Alert.</div>
<div class="t" style="left:1206px;top:268px;font-size:12px;color:#333">Jan 1, 2021</div>
<div class="t" style="left:1307px;top:268px;font-size:12px;color:#333">12:00 PM</div>
<div class="t" style="left:1206px;top:306px;font-size:16px;font-weight:bold;color:#222">12345 Recommendation Alert</div>
<div class="t" style="left:1206px;top:328px;font-size:14px;color:#333">Description of the Recommendation Alert.</div>
<div class="t" style="left:1206px;top:354px;font-size:12px;color:#333">May 4, 2020</div>
<div class="t" style="left:1307px;top:354px;font-size:12px;color:#333">12:00 PM</div>
<div class="t" style="left:1772px;top:221px;font-size:18px;color:#333"><span style="font-size:11px;position:relative;top:-6px">$</span>300<span style="font-size:11px;position:relative;top:-6px">K</span>p.w</div>

<!-- ANNOTATIONS -->
<div class="tl" style="left:220px;top:135px;width:356px;height:3px"></div>
<div class="dot" style="left:570px;top:130px"></div>
<div class="t teal" style="left:599px;top:128px;font-size:39px">Block Properties</div>
<div class="tl" style="left:332px;top:272px;width:127px;height:3px"></div>
<div class="dot" style="left:453px;top:267px"></div>
<div class="t teal" style="left:490px;top:251px;font-size:39px">Add a Data Source to a block</div>
<div class="tl" style="left:873px;top:521px;width:355px;height:3px"></div>
<div class="dot" style="left:1222px;top:516px"></div>
<div class="t teal" style="left:1261px;top:498px;font-size:39px">Data Source</div>
</body></html>
